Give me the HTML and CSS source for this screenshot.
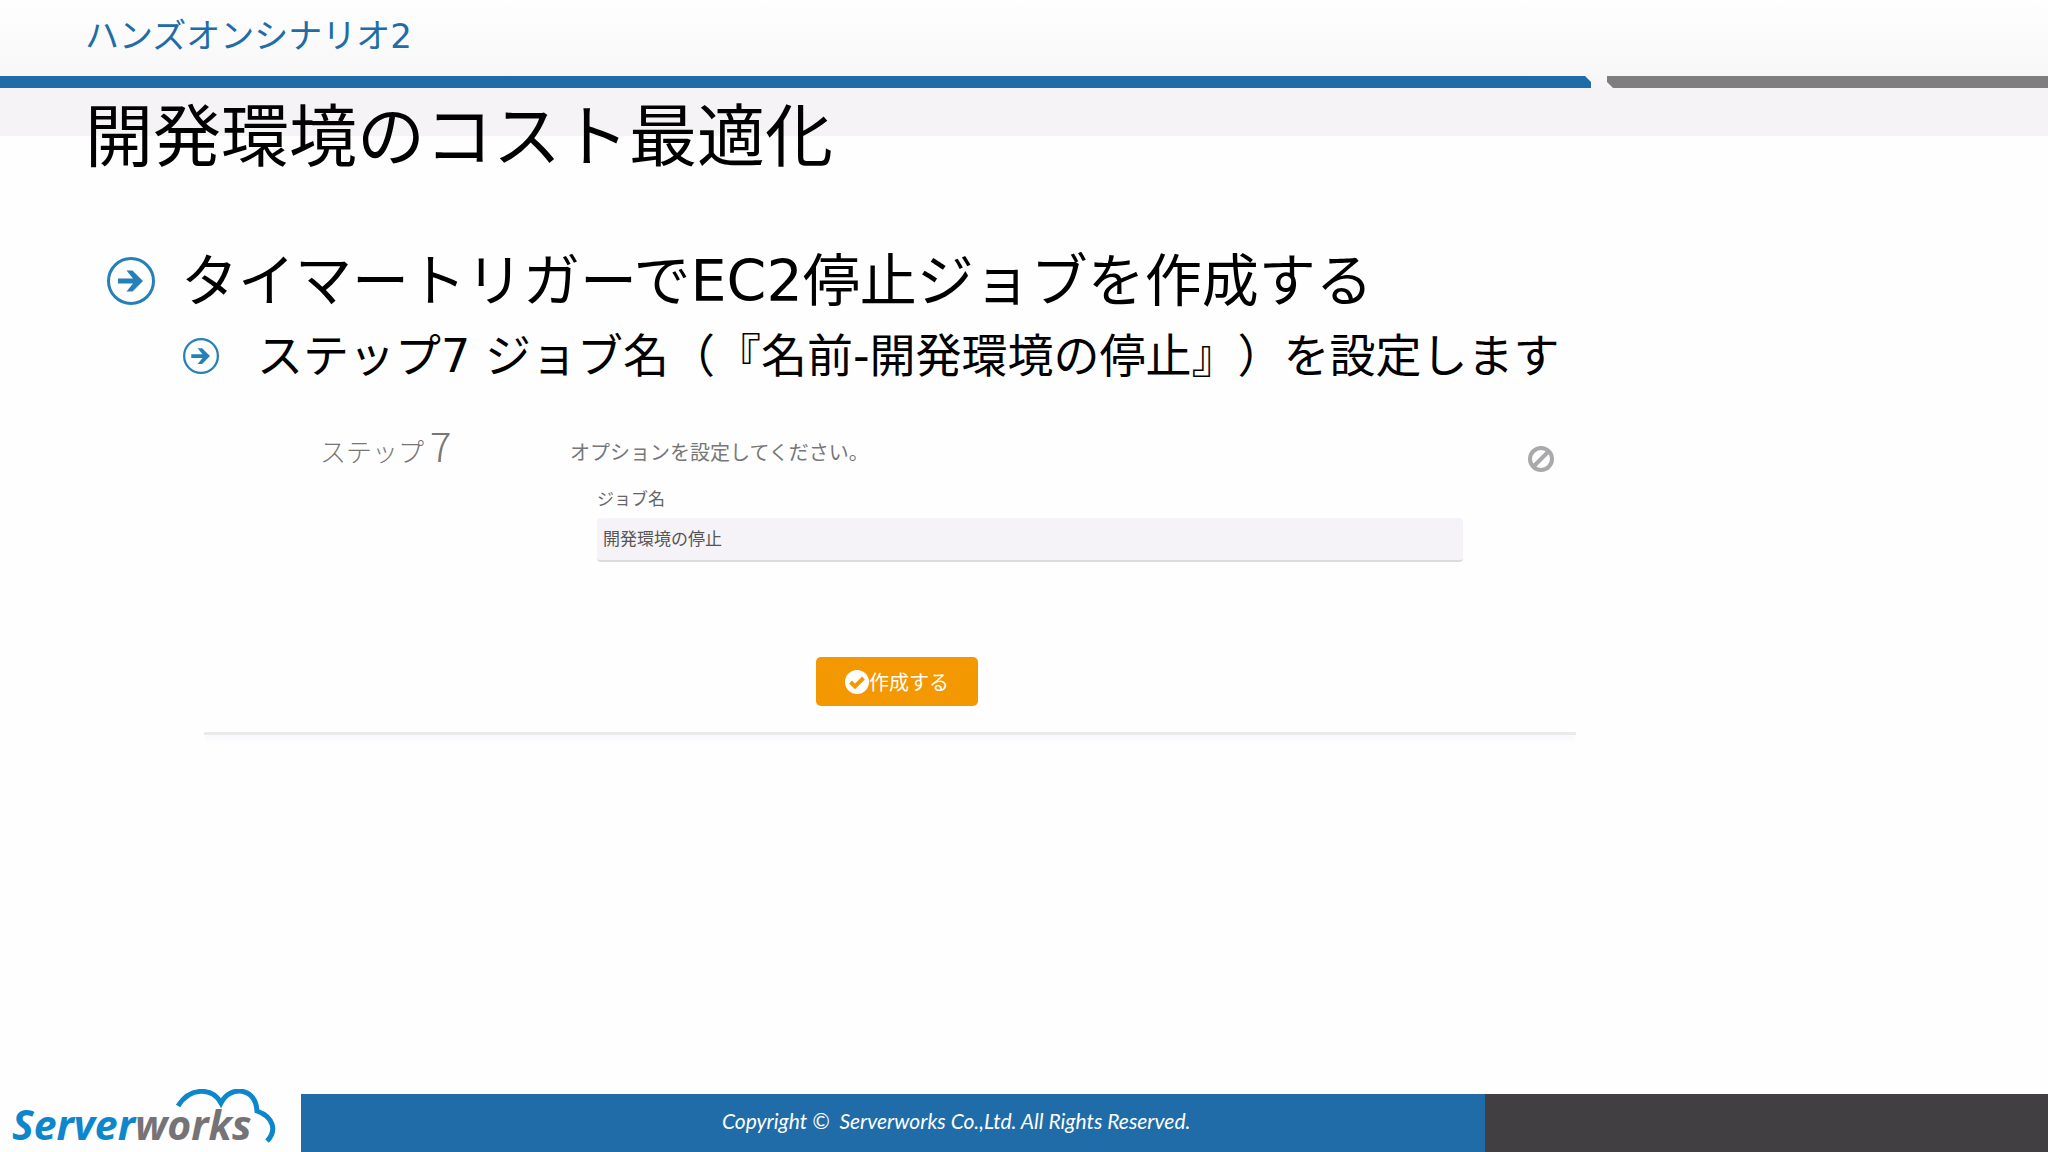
FILE: index.html
```html
<!DOCTYPE html>
<html lang="ja">

<head>
    <meta charset="UTF-8">
    <meta name="viewport" content="width=device-width, initial-scale=1.0">
    <title>開発環境のコスト最適化</title>
    <link rel="stylesheet" href="styles.css">
</head>

<body>
    <header class="slide-header">
        <p class="chapter">ハンズオンシナリオ2</p>
        <div class="rule">
            <div class="rule-blue"></div>
            <div class="rule-gray"></div>
        </div>
        <h1>開発環境のコスト最適化</h1>
    </header>

    <main>
        <ul class="points">
            <li class="point">
                <svg class="bullet" viewBox="0 0 48 48">
                    <circle cx="24" cy="24" r="22.5" />
                    <path d="M11 21.5h15l-6.5-8h6L36 24 25.5 34.5h-6l6.5-8H11z" />
                </svg>
                <span>タイマートリガーでEC2停止ジョブを作成する</span>
            </li>
            <li class="point sub-point">
                <svg class="bullet" viewBox="0 0 48 48">
                    <circle cx="24" cy="24" r="22.5" />
                    <path d="M11 21.5h15l-6.5-8h6L36 24 25.5 34.5h-6l6.5-8H11z" />
                </svg>
                <span>ステップ7 ジョブ名（『名前-開発環境の停止』）を設定します</span>
            </li>
        </ul>

        <form class="step-panel">
            <div class="step-row">
                <h2 class="step-title">ステップ<span class="step-number">7</span></h2>
                <div class="step-body">
                    <p class="step-lead">オプションを設定してください。</p>
                    <label for="job-name">ジョブ名</label>
                    <input type="text" id="job-name" value="開発環境の停止">
                </div>
                <svg class="ban" viewBox="0 0 26 26">
                    <circle cx="13" cy="13" r="11" />
                    <path d="M5.5 20.5l15-15" />
                </svg>
            </div>
            <button type="button" class="create">
                <svg class="check" viewBox="0 0 24 24">
                    <circle cx="12" cy="12" r="12" />
                    <path d="M5.5 12l4.5 4.5 8.5-8.5" />
                </svg>作成する
            </button>
        </form>
    </main>

    <footer>
        <div class="logo">
            <svg class="cloud" viewBox="0 0 100 54">
                <path d="M2 17C14-2 36-2 45 14C54-4 80-2 81 22C98 28 101 42 91 52" />
            </svg>
            <p class="logo-text">Server<span>works</span></p>
        </div>
        <p class="copyright">Copyright ©&nbsp; Serverworks Co.,Ltd. All Rights Reserved.</p>
        <div class="footer-end"></div>
    </footer>
</body>

</html>
```

FILE: styles.css
```css
* {
    box-sizing: border-box;
}
body {
    margin: 0;
    min-height: 100vh;
    display: flex;
    flex-direction: column;
    background-color: #fefefe;
    color: #000;
    font-family: "DejaVu Sans", "Noto Sans CJK JP", sans-serif;
    text-spacing-trim: space-all;
}
h1, h2, p, ul {
    margin: 0;
    padding: 0;
    font-weight: normal;
}

/* header */
.slide-header {
    background: linear-gradient(#fefefe, #f8f7f8 76px, #f5f3f6 88px, #f5f3f6 136px, transparent 136px);
}
.chapter {
    height: 76px;
    padding-left: 85px;
    font-size: 34px;
    line-height: 72px;
    color: #206ca8;
}
.rule {
    display: flex;
    gap: 16px;
    height: 12px;
}
.rule-blue {
    flex: 1591;
    background-color: #206ca8;
    clip-path: polygon(0 0, calc(100% - 6px) 0, 100% 6px, 100% 100%, 0 100%);
}
.rule-gray {
    flex: 441;
    background-color: #7f7d7f;
    clip-path: polygon(0 0, 100% 0, 100% 100%, 6px 100%, 0 6px);
}
h1 {
    padding-left: 85px;
    font-size: 68px;
    line-height: 100px;
}

/* bullets */
main {
    flex: 1;
}
.points {
    padding: 51px 0 0 107px;
    list-style: none;
}
.point {
    display: flex;
    align-items: center;
    gap: 26px;
    font-size: 57px;
    line-height: 84px;
}
.sub-point {
    padding-left: 76px;
    gap: 38px;
    font-size: 46px;
    line-height: 66px;
}
.bullet {
    width: 48px;
    height: 48px;
    fill: #2580b8;
}
.bullet circle {
    fill: none;
    stroke: #2580b8;
    stroke-width: 3;
}
.sub-point .bullet {
    width: 36px;
    height: 36px;
}

/* step form */
.step-panel {
    width: 67%;
    margin: 31px 0 0 204px;
    padding-bottom: 26px;
    border-bottom: 3px solid #ebe9ec;
    box-shadow: 0 8px 4px -2px #faf9fb;
    font-family: "Noto Sans CJK JP", sans-serif;
    color: #777;
}
.step-row {
    display: flex;
    padding: 0 22px 0 116px;
}
.step-title {
    width: 250px;
    font-size: 26px;
    font-weight: 300;
    line-height: 50px;
}
.step-number {
    margin-left: 6px;
    font-size: 40px;
}
.step-body {
    flex: 1;
    padding-top: 16px;
}
.step-lead {
    font-size: 20px;
    line-height: 32px;
}
label {
    display: block;
    margin: 18px 0 8px 27px;
    font-size: 17px;
    line-height: 24px;
    color: #666;
}
#job-name {
    display: block;
    width: calc(100% - 92px);
    height: 44px;
    margin-left: 27px;
    padding: 0 6px 4px;
    border: none;
    border-bottom: 2px solid #dddbde;
    border-radius: 4px;
    background-color: #f5f3f7;
    font-family: inherit;
    font-size: 17px;
    color: #555;
}
.ban {
    width: 26px;
    height: 26px;
    margin-top: 26px;
    fill: none;
    stroke: #a9a8aa;
    stroke-width: 4;
}
.create {
    display: flex;
    align-items: center;
    justify-content: center;
    width: 162px;
    height: 49px;
    margin: 95px 0 0 612px;
    padding: 0;
    border: none;
    border-radius: 5px;
    background-color: #f39800;
    font-family: inherit;
    font-size: 20px;
    color: #fff;
}
.check {
    width: 24px;
    height: 24px;
    fill: #fff;
}
.check path {
    fill: none;
    stroke: #f39800;
    stroke-width: 4;
}

/* footer */
footer {
    display: flex;
    align-items: flex-end;
    height: 64px;
}
.logo {
    position: relative;
    width: 301px;
    padding-left: 12px;
}
.logo-text {
    font-family: "Noto Sans", sans-serif;
    font-size: 41px;
    font-weight: bold;
    font-style: italic;
    line-height: 56px;
    color: #0d86cb;
}
.logo-text span {
    color: #767377;
}
.cloud {
    position: absolute;
    left: 176px;
    bottom: 9px;
    width: 100px;
    height: 54px;
    fill: none;
    stroke: #0d86cb;
    stroke-width: 5;
}
.copyright {
    width: 57.8%;
    height: 58px;
    padding-left: 421px;
    background-color: #206ca8;
    font-family: Lato, "Open Sans", sans-serif;
    font-size: 21px;
    font-style: italic;
    line-height: 54px;
    color: #fff;
}
.footer-end {
    flex: 1;
    height: 58px;
    background-color: #413f42;
}
```
